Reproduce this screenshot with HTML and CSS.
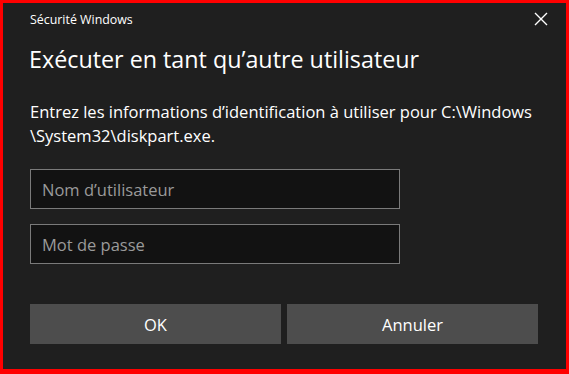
FILE: index.html
```html
<!DOCTYPE html>
<html lang="fr">
<head>
    <meta charset="UTF-8">
    <meta name="viewport" content="width=device-width, initial-scale=1.0">
    <title>Sécurité Windows</title>
    <link rel="stylesheet" href="styles.css">
</head>
<body>
    <div class="dialog">
        <div class="titlebar">
            <span class="app-name">Sécurité Windows</span>
            <button class="close" aria-label="Fermer">
                <svg width="14" height="14" viewBox="0 0 14 14">
                    <path d="M1 1 L13 13 M13 1 L1 13" stroke="#ffffff" stroke-width="1.4" fill="none"/>
                </svg>
            </button>
        </div>

        <h1>Exécuter en tant qu’autre utilisateur</h1>
        <p class="info">Entrez les informations d’identification à utiliser pour C:\Windows<br>\System32\diskpart.exe.</p>

        <form class="credentials">
            <input type="text" class="field" placeholder="Nom d’utilisateur">
            <input type="password" class="field" placeholder="Mot de passe">

            <div class="actions">
                <button type="submit" class="btn">OK</button>
                <button type="button" class="btn">Annuler</button>
            </div>
        </form>
    </div>
</body>
</html>
```

FILE: styles.css
```css
/* Reset */
* {
    margin: 0;
    padding: 0;
    box-sizing: border-box;
}

body {
    background-color: #ff0000;
    font-family: "Open Sans", "Noto Sans", sans-serif;
    color: #ffffff;
}

/* Fenêtre de dialogue */
.dialog {
    width: 569px;
    height: 374px;
    border: 3px solid #ff0000;
    border-bottom-width: 5px;
    background-color: #1f1f1f;
    padding: 0 27px;
}

.titlebar {
    display: flex;
    justify-content: space-between;
    align-items: center;
    height: 32px;
}

.app-name {
    font-size: 12.4px;
}

.close {
    background: none;
    border: none;
    width: 32px;
    height: 32px;
    display: flex;
    align-items: center;
    justify-content: center;
    margin-right: -18px;
}

.dialog h1 {
    font-size: 23.3px;
    font-weight: 400;
    line-height: 30px;
    margin-top: 9px;
    margin-left: -1px;
}

.info {
    font-size: 16.5px;
    line-height: 24px;
    margin-top: 26px;
}

/* Champs */
.credentials {
    display: flex;
    flex-direction: column;
}

.field {
    width: 370px;
    height: 40px;
    margin-top: 21px;
    padding: 0 11px;
    background-color: #121212;
    border: 1px solid #7a7a7a;
    color: #ffffff;
    font-family: inherit;
    font-size: 16.5px;
    outline: none;
}

.field + .field {
    margin-top: 15px;
}

.field::placeholder {
    color: #9a9a9a;
}

/* Boutons */
.actions {
    display: flex;
    gap: 6px;
    margin-top: 40px;
}

.btn {
    width: 251px;
    height: 40px;
    background-color: #4d4d4d;
    border: none;
    color: #ffffff;
    font-family: inherit;
    font-size: 16.5px;
}
```
